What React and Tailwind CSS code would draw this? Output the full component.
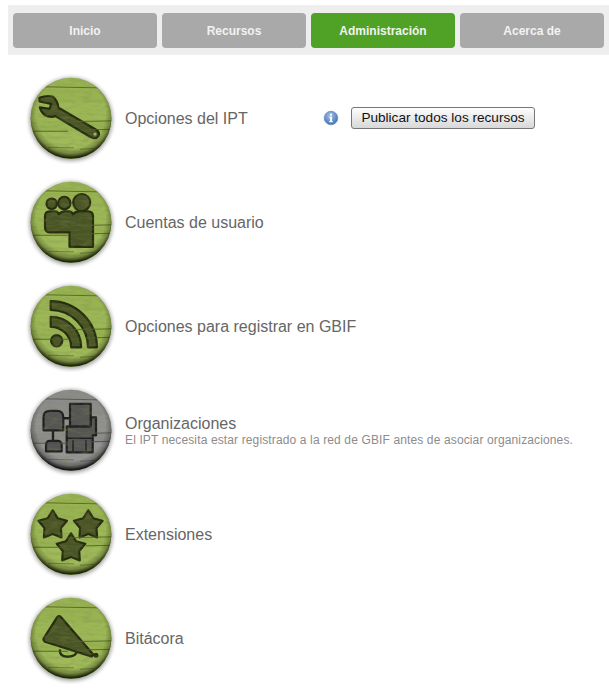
const tabs = [
    { label: 'Inicio' },
    { label: 'Recursos' },
    { label: 'Administración', active: true },
    { label: 'Acerca de' },
]

const star = (cx, cy, R = 15, r = 8.6) => {
    const pts = []
    for (let i = 0; i < 10; i++) {
        const rad = i % 2 === 0 ? R : r
        const a = -Math.PI / 2 + (i * Math.PI) / 5
        pts.push(`${(cx + rad * Math.cos(a)).toFixed(1)},${(cy + rad * Math.sin(a)).toFixed(1)}`)
    }
    return pts.join(' ')
}

const WrenchIcon = () => (
    <>
        <path d="M13.5 24.5 Q21 21.5 27 23.5 Q31.5 27 32.5 34.5 L71 57 Q74 59.5 72.5 62.5 Q70.5 65.5 67.3 64.8 L64 63.5 L29.5 42.8 Q24 44.5 19 42 Q15 39 13.8 34 L23.5 35.5 L25.2 30.5 L13.5 28 Z" />
        <circle cx="69" cy="60.8" r="1.6" fill="#a3b56a" stroke="none" />
    </>
)

const PeopleIcon = () => (
    <>
        <circle cx="25.7" cy="26.5" r="5.2" />
        <circle cx="38.3" cy="25.8" r="6.2" />
        <circle cx="55.7" cy="25.2" r="8.5" />
        <path d="M19 39 Q19 34 24 34 L29 34 Q32 34 33 37 Q35 34 39 34 L43 34 Q46 34 47 37 Q49 34 53 34 L62 34 Q67 34 67 39 L67 69.5 L43.5 69.5 L43.5 55 L24 55 Q19 55 19 50 Z" />
    </>
)

const RssIcon = () => (
    <>
        <circle cx="30.7" cy="59.5" r="5.6" />
        <path d="M24.7 35.5 A30.5 30.5 0 0 1 55.2 66 L45.2 66 A20.5 20.5 0 0 0 24.7 45.5 Z" />
        <path d="M24.7 19.8 A46.2 46.2 0 0 1 70.9 66 L62 66 A37.3 37.3 0 0 0 24.7 28.7 Z" />
    </>
)

const OrgIcon = () => (
    <>
        <path d="M27 45 L27 56 M37 33 L44 33" fill="none" strokeWidth="2.4" />
        <path d="M17.5 45 L17.5 32 Q17.5 25.5 24 25.5 L31 25.5 Q37.3 25.5 37.3 32 L37.3 45 Z" />
        <path d="M20 66 L20 60 Q20 55.5 24 55.5 L31.5 55.5 Q35.7 55.5 35.7 60 L35.7 66 Z" />
        <path d="M40.7 41 L40.7 67 L66.7 67 L66.7 50 L70 50 L70 32 L64.7 32 L64.7 41 Z" />
        <rect x="44" y="18.5" width="20.7" height="22.5" />
        <path d="M47 55 L47 67 M60 55 L60 67 M41 53 L66 53" fill="none" strokeWidth="1.4" />
    </>
)

const StarsIcon = () => (
    <>
        <polygon points={star(26.7, 36)} />
        <polygon points={star(62.3, 36)} />
        <polygon points={star(45, 59)} />
    </>
)

const MegaphoneIcon = () => (
    <>
        <path d="M34 56 Q33 63 41 63.5 Q50 63.5 51 58" fill="none" strokeWidth="2.4" />
        <path d="M31 24 Q33 21.5 35.5 24.5 L67 61 Q67 63.5 64.5 63 L19 48.5 Q16.5 47 18 44.5 Z" />
        <circle cx="70" cy="62" r="1.4" />
    </>
)

const palettes = {
    green: {
        base: '#98b452', light: '#a9c263', dark: '#1f260a', icon: '#4a5526', stroke: '#262c0e', line: '#4a5a20',
    },
    gray: {
        base: '#8c8c8c', light: '#a0a0a0', dark: '#181818', icon: '#555555', stroke: '#1e1e1e', line: '#4a4a4a',
    },
}

const Badge = ({ id, tone = 'green', children }) => {
    const c = palettes[tone]
    return (
        <svg width="90" height="90" viewBox="0 0.7 90 90" className="shrink-0">
            <defs>
                <radialGradient id={`${id}-edge`} cx="50%" cy="44%" r="54%">
                    <stop offset="78%" stopColor={c.dark} stopOpacity="0" />
                    <stop offset="90%" stopColor={c.dark} stopOpacity="0.3" />
                    <stop offset="100%" stopColor={c.dark} stopOpacity="1" />
                </radialGradient>
                <filter id={`${id}-wood`} x="0" y="0" width="100%" height="100%">
                    <feTurbulence type="fractalNoise" baseFrequency="0.09 0.3" numOctaves="4" seed="7" />
                    <feColorMatrix values="0 0 0 0 0.22  0 0 0 0 0.24  0 0 0 0 0.08  1.3 0 0 0 -0.55" />
                </filter>
                <filter id={`${id}-shadow`} x="-20%" y="-20%" width="140%" height="140%">
                    <feGaussianBlur stdDeviation="2" />
                </filter>
                <clipPath id={`${id}-clip`}>
                    <circle cx="45" cy="45" r="40.5" />
                </clipPath>
            </defs>
            <circle cx="45" cy="46" r="41.5" fill="#000000" opacity="0.4" filter={`url(#${id}-shadow)`} />
            <circle cx="45" cy="45" r="40.5" fill={c.base} />
            <g clipPath={`url(#${id}-clip)`}>
                <rect x="4" y="29" width="82" height="19" fill={c.light} opacity="0.25" />
                <rect x="4" y="58" width="82" height="28" fill={c.light} opacity="0.45" />
                <g fill={c.icon} stroke={c.stroke} strokeWidth="2.2" strokeLinejoin="round">
                    {children}
                </g>
                <path d="M18 13.5 L72 14.5 M4 58 L42 58 M42 48.5 L86 47.5 M60 56.5 L86 56" stroke={c.line} strokeWidth="0.8" fill="none" />
                <path d="M22 74 L48 74.5 M54 76 L68 75" stroke={c.line} strokeWidth="1" fill="none" opacity="0.55" />
                <rect x="4" y="4" width="82" height="82" filter={`url(#${id}-wood)`} opacity="0.6" />
                <circle cx="45" cy="45" r="41" fill={`url(#${id}-edge)`} />
            </g>
        </svg>
    )
}

const InfoIcon = () => (
    <svg width="16" height="16" viewBox="0 0 16 16" className="shrink-0">
        <defs>
            <radialGradient id="info-fill" cx="45%" cy="35%" r="65%">
                <stop offset="0%" stopColor="#a9c6ec" />
                <stop offset="100%" stopColor="#3f6fb5" />
            </radialGradient>
        </defs>
        <circle cx="8" cy="8" r="6.8" fill="url(#info-fill)" stroke="#6f8fbe" strokeWidth="0.8" />
        <rect x="7" y="3.6" width="2" height="2" fill="#ffffff" />
        <path d="M6.4 6.8 L9 6.8 L9 11 L9.8 11 L9.8 12.2 L6.3 12.2 L6.3 11 L7.1 11 L7.1 8 L6.4 8 Z" fill="#ffffff" />
    </svg>
)

const rows = [
    { id: 'ipt', label: 'Opciones del IPT', icon: <WrenchIcon />, publish: true },
    { id: 'users', label: 'Cuentas de usuario', icon: <PeopleIcon /> },
    { id: 'gbif', label: 'Opciones para registrar en GBIF', icon: <RssIcon /> },
    {
        id: 'orgs',
        label: 'Organizaciones',
        icon: <OrgIcon />,
        tone: 'gray',
        note: 'El IPT necesita estar registrado a la red de GBIF antes de asociar organizaciones.',
    },
    { id: 'ext', label: 'Extensiones', icon: <StarsIcon /> },
    { id: 'log', label: 'Bitácora', icon: <MegaphoneIcon /> },
]

const App = () => {
    return (
        <div className="w-[609px] h-[698px] bg-white pt-[5px] pl-[8px] overflow-hidden font-['Liberation_Sans',Arial,sans-serif]">
            <nav className="flex gap-[5px] h-[50px] px-[5px] py-[8px] bg-[#eeeeee]">
                {tabs.map(tab => (
                    <a
                        key={tab.label}
                        className={`w-[144px] h-[35px] flex items-center justify-center rounded-[4px] text-xs font-bold text-[#f2f2f2] ${tab.active ? 'bg-[#4fa225]' : 'bg-[#a9a9a9]'}`}
                    >
                        {tab.label}
                    </a>
                ))}
            </nav>

            <div className="flex flex-col pt-[12px] pl-[18px]">
                {rows.map(row => (
                    <div key={row.id} className="h-[104px] flex items-center gap-[9px]">
                        <Badge id={row.id} tone={row.tone}>{row.icon}</Badge>
                        {row.note ? (
                            <div className="flex flex-col mb-[2px]">
                                <span className="text-base leading-[19px] text-[#666666]">{row.label}</span>
                                <span className="text-xs leading-[14px] tracking-[0.13px] text-[#8c8c8c] whitespace-nowrap">{row.note}</span>
                            </div>
                        ) : (
                            <span className="w-[199px] shrink-0 text-base text-[#666666] whitespace-nowrap">{row.label}</span>
                        )}
                        {row.publish && (
                            <div className="flex items-center gap-[12px] -mt-[2px] -ml-[10px]">
                                <InfoIcon />
                                <button className="w-[184px] h-[22px] flex items-center justify-center rounded-[3px] border border-[#777777] bg-gradient-to-b from-[#fdfdfd] to-[#d8d8d8] text-[13.6px] text-[#111111]">
                                    Publicar todos los recursos
                                </button>
                            </div>
                        )}
                    </div>
                ))}
            </div>
        </div>
    )
}

export default App
